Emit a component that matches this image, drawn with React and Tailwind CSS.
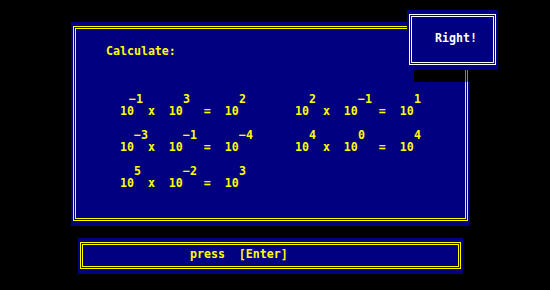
import React from 'react';

// Double-lined box on navy, like the old text-mode dialogs
const Panel = ({ className, line = 'border-[#ffff00]', children }) => (
  <div className={`bg-[#000080] pt-[4px] pb-[5px] px-[2px] ${className}`}>
    <div className={`h-full border p-[1px] ${line}`}>
      <div className={`h-full border ${line}`}>{children}</div>
    </div>
  </div>
);

// One product of powers: exponents on the line above the bases
const Equation = ({ a, b, c, shift }) => (
  <div>
    <div className="flex h-[12px] whitespace-pre">
      <span className={shift ? 'ml-[9px] w-[54px]' : 'ml-[14px] w-[49px]'}>{a}</span>
      <span className="w-[56px]">{b}</span>
      <span>{c}</span>
    </div>
    <div className="h-[12px] whitespace-pre">{'10  x  10   =  10'}</div>
  </div>
);

const leftColumn = [
  { a: '\u22121', b: '3', c: '2', shift: true },
  { a: '\u22123', b: '\u22121', c: '\u22124' },
  { a: '5', b: '\u22122', c: '3' },
];

const rightColumn = [
  { a: '2', b: '\u22121', c: '1' },
  { a: '4', b: '0', c: '4' },
];

export default function App() {
  return (
    <div className="relative w-[550px] h-[290px] overflow-hidden bg-black pl-[71px] pt-[22px] font-['DejaVu_Sans_Mono',monospace] text-[11.6px] leading-[12px] font-bold text-[#ffff00]">
      {/* Main exercise panel */}
      <Panel className="w-[399px] h-[204px]">
        <div className="pl-[30px] pt-[16px]">
          <div>Calculate:</div>
          <div className="mt-[36px] flex pl-[14px]">
            <div className="w-[175px] flex flex-col gap-[12px]">
              {leftColumn.map((eq, i) => (
                <Equation key={i} {...eq} />
              ))}
            </div>
            <div className="flex flex-col gap-[12px]">
              {rightColumn.map((eq, i) => (
                <Equation key={i} {...eq} />
              ))}
            </div>
          </div>
        </div>
      </Panel>

      {/* Prompt bar */}
      <Panel className="ml-[7px] mt-[12px] w-[385px] h-[36px]">
        <div className="pl-[107px] pt-[3px] whitespace-pre">{'press  [Enter]'}</div>
      </Panel>

      {/* Popup shadow over the panel border */}
      <div className="absolute left-[414px] top-[70px] w-[56px] h-[12px] bg-black flex pl-[51px] gap-[1px]">
        <div className="w-[1px] h-full bg-[#808080]" />
        <div className="w-[1px] h-full bg-[#808080]" />
      </div>

      {/* Feedback popup */}
      <div className="absolute left-[407px] top-[10px]">
        <Panel className="w-[91px] h-[60px]" line="border-[#ffffff]">
          <div className="pl-[23px] pt-[15px] text-white">Right!</div>
        </Panel>
      </div>
    </div>
  );
}
